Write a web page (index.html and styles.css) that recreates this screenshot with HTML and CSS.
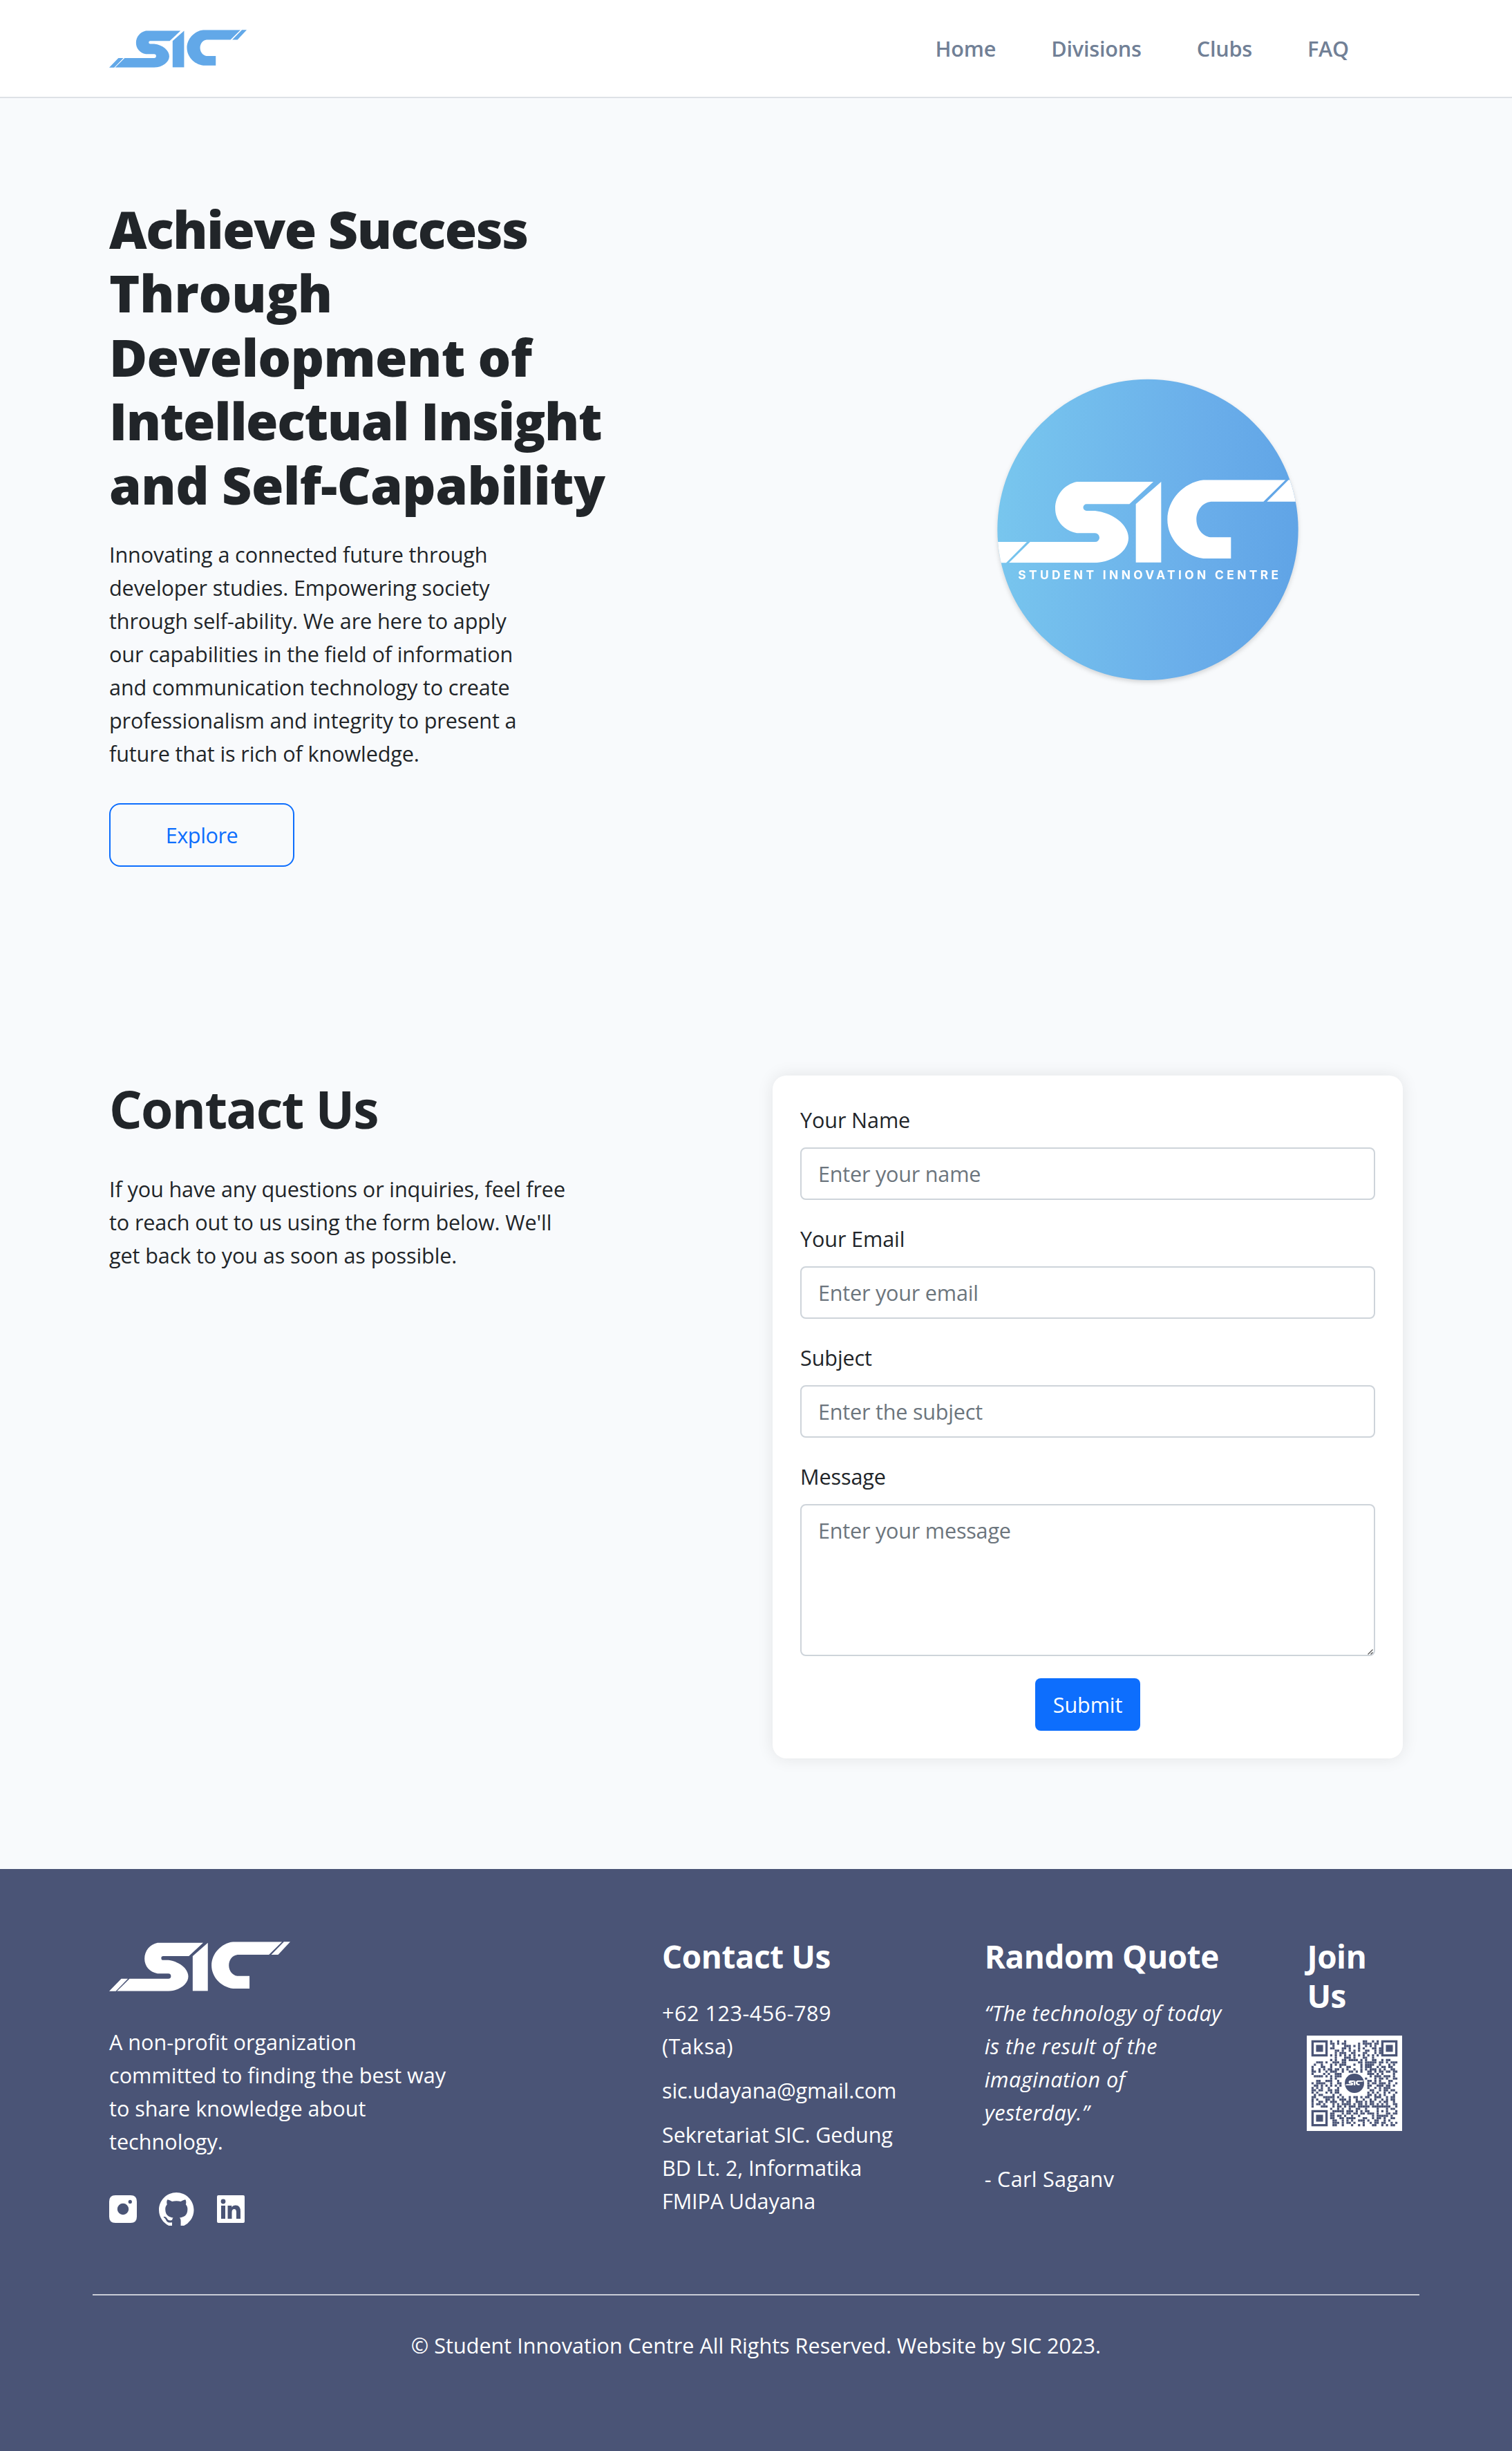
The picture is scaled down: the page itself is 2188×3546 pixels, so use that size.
FILE: index.html
```html
<!DOCTYPE html>
<html lang="en">
<head>
<meta charset="utf-8">
<title>Student Innovation Centre</title>
<link rel="stylesheet" href="styles.css">
</head>
<body>
<svg class="defs" aria-hidden="true">
  <symbol id="letters" viewBox="62 493 1316 360">
    <path d="M118 853 L210 762 H492 A19 19 0 0 0 492 724 H413 C355 712 319 670 319 616 C319 560 358 512 413 501 H745 L641 598 H455 A14.5 14.5 0 0 0 455 627 H492 C575 637 637 690 637 745 C637 800 575 848 492 853 Z"/>
    <path d="M669 598 L779 501 V851 H669 Z"/>
    <path d="M962 493 H1319 L1223 587 H995 C955 592 932 627 932 665 C932 703 958 737 993 742 H1082 V834 H962 C870 820 806 745 806 665 C806 580 875 505 962 493 Z"/>
  </symbol>
  <symbol id="logo" viewBox="62 493 1316 360">
    <use href="#letters" x="62" y="493" width="1316" height="360"/>
    <path d="M62 853 L150 762 H198 L110 853 Z M1240 587 L1332 493 H1378 L1290 587 Z"/>
  </symbol>
</svg>

<header class="nav">
  <div class="container nav-inner">
    <svg class="nav-logo"><use href="#logo"/></svg>
    <nav class="nav-links">
      <a>Home</a><a>Divisions</a><a>Clubs</a><a>FAQ</a>
    </nav>
  </div>
</header>

<main>
  <section class="container hero">
    <div>
      <h1 class="hero-title"><span class="l1">Achieve Success</span><span class="l2">Through</span><span class="l3">Development of</span><span class="l4">Intellectual Insight</span><span class="l5">and Self-Capability</span></h1>
      <p class="hero-text">Innovating a connected future through<br>developer studies. Empowering society<br>through self-ability. We are here to apply<br>our capabilities in the field of information<br>and communication technology to create<br>professionalism and integrity to present a<br>future that is rich of knowledge.</p>
      <a class="explore">Explore</a>
    </div>
    <svg class="hero-badge" viewBox="67 57 1308 1308">
      <defs>
        <linearGradient id="sky" x1="0" y1=".46" x2="1" y2=".54">
          <stop offset="0" stop-color="#78c6ee"/><stop offset=".66" stop-color="#6aaeea"/><stop offset="1" stop-color="#60a4e6"/>
        </linearGradient>
        <clipPath id="disc"><circle cx="721" cy="709" r="653"/></clipPath>
      </defs>
      <circle cx="721" cy="709" r="653" fill="url(#sky)"/>
      <g fill="#fff" clip-path="url(#disc)">
        <use href="#letters" x="62" y="493" width="1316" height="360"/>
        <path d="M60 762 H196 L106 853 H60 Z M1238 587 L1332 493 H1400 V587 Z"/>
        <text class="badge-text" x="158" y="923" textLength="1130">STUDENT INNOVATION CENTRE</text>
      </g>
    </svg>
  </section>

  <section class="container contact">
    <div>
      <h2 class="contact-title">Contact Us</h2>
      <p class="contact-text">If you have any questions or inquiries, feel free<br>to reach out to us using the form below. We'll<br>get back to you as soon as possible.</p>
    </div>
    <form class="card">
      <label for="name">Your Name</label>
      <input id="name" type="text" placeholder="Enter your name">
      <label for="email">Your Email</label>
      <input id="email" type="email" placeholder="Enter your email">
      <label for="subject">Subject</label>
      <input id="subject" type="text" placeholder="Enter the subject">
      <label for="message">Message</label>
      <div class="area">
        <textarea id="message" placeholder="Enter your message"></textarea>
        <svg class="grip" viewBox="0 0 8 8"><path d="M.5 7.5 L7.5 .5 M4.5 7.5 L7.5 4.5"/></svg>
      </div>
      <button class="submit" type="button">Submit</button>
    </form>
  </section>
</main>

<footer class="footer">
  <div class="container footer-cols">
    <div>
      <svg class="footer-logo"><use href="#logo"/></svg>
      <p class="about">A non-profit organization<br>committed to finding the best way<br>to share knowledge about<br>technology.</p>
      <div class="social">
        <svg class="ig" viewBox="0 0 40 40"><path fill-rule="evenodd" d="M9 0H31Q40 0 40 9V31Q40 40 31 40H9Q0 40 0 31V9Q0 0 9 0ZM20 11.8a8.2 8.2 0 1 0 0 16.4a8.2 8.2 0 1 0 0-16.4ZM30.3 6.8a2.6 2.6 0 1 0 0 5.2a2.6 2.6 0 1 0 0-5.2Z"/></svg>
        <svg class="gh" viewBox="0 0 16 15.2"><path d="M8 0C3.58 0 0 3.58 0 8c0 3.54 2.29 6.53 5.47 7.59.4.07.55-.17.55-.38 0-.19-.01-.82-.01-1.49-2.01.37-2.53-.49-2.69-.94-.09-.23-.48-.94-.82-1.13-.28-.15-.68-.52-.01-.53.63-.01 1.08.58 1.23.82.72 1.21 1.87.87 2.33.66.07-.52.28-.87.51-1.07-1.78-.2-3.64-.89-3.64-3.95 0-.87.31-1.59.82-2.15-.08-.2-.36-1.02.08-2.12 0 0 .67-.21 2.2.82.64-.18 1.32-.27 2-.27s1.36.09 2 .27c1.53-1.04 2.2-.82 2.2-.82.44 1.1.16 1.92.08 2.12.51.56.82 1.27.82 2.15 0 3.07-1.87 3.75-3.65 3.95.29.25.54.73.54 1.48 0 1.07-.01 1.93-.01 2.2 0 .21.15.46.55.38A8.01 8.01 0 0 0 16 8c0-4.42-3.58-8-8-8Z"/></svg>
        <svg class="li" viewBox="0 0 40 40"><path fill-rule="evenodd" d="M2 0H38Q40 0 40 2V38Q40 40 38 40H2Q0 40 0 38V2Q0 0 2 0ZM6 15V34H12V15ZM9 5.6a3.4 3.4 0 1 0 0 6.8a3.4 3.4 0 1 0 0-6.8ZM15.5 15V34H21.5V24.5Q21.5 20 25 20Q28 20 28 24.5V34H34V23.5Q34 14.5 27 14.5Q23 14.5 21.3 17.6V15Z"/></svg>
      </div>
    </div>
    <div>
      <h3>Contact Us</h3>
      <p class="phone">+62 123-456-789<br>(Taksa)</p>
      <p>sic.udayana@gmail.com</p>
      <p>Sekretariat SIC. Gedung<br>BD Lt. 2, Informatika<br>FMIPA Udayana</p>
    </div>
    <div>
      <h3>Random Quote</h3>
      <p class="quote">“The technology of today<br>is the result of the<br>imagination of<br>yesterday.”</p>
      <p class="author">- Carl Saganv</p>
    </div>
    <div>
      <h3>Join Us</h3>
      <svg class="qr" viewBox="0 0 41 41">
        <rect width="41" height="41" fill="#fff"/>
        <g id="qr-modules"></g>
        <circle cx="20.5" cy="20.5" r="4.15"/>
        <svg x="16.4" y="19.2" width="8.2" height="2.3" fill="#fff"><use href="#logo"/></svg>
      </svg>
    </div>
  </div>
  <p class="copyright">© Student Innovation Centre All Rights Reserved. Website by SIC 2023.</p>
</footer>
<script src="qr.js"></script>
</body>
</html>
```
FILE: styles.css
```css
* { box-sizing: border-box; }

body {
  margin: 0;
  background: #f8fafc;
  color: #212529;
  font-family: "Open Sans", "Noto Sans", sans-serif;
  font-size: 30.6px;
  line-height: 48px;
  letter-spacing: -0.12px;
}

h1, h2, h3, p { margin: 0; }

.defs { position: absolute; width: 0; height: 0; }

.container { width: 1872px; margin: 0 auto; }

/* Navigation */
.nav { height: 142px; background: #fff; border-bottom: 2px solid #dee2e6; }
.nav-inner { display: flex; justify-content: space-between; align-items: center; height: 140px; }
.nav-logo { width: 199px; height: 55px; fill: #62a8e8; }
.nav-links { display: flex; gap: 80px; padding-right: 78px; color: #718096; font-weight: 600; letter-spacing: -0.2px; }

/* Hero */
.hero { display: grid; grid-template-columns: 1134px 738px; align-items: center; justify-items: start; padding-top: 143px; }
.hero-title { font-size: 75.2px; line-height: 92.4px; font-weight: 800; }
.hero-title span { display: block; white-space: nowrap; }
.l1 { letter-spacing: -1.45px; }
.l2 { letter-spacing: -0.2px; }
.l3 { letter-spacing: -0.6px; }
.l4 { letter-spacing: -1.35px; }
.l5 { letter-spacing: -0.5px; }
.hero-text { margin-top: 31px; }
.explore {
  display: flex; align-items: center; justify-content: center;
  width: 268px; height: 92px; margin-top: 48px;
  border: 2px solid #0d6efd; border-radius: 16px;
  color: #0d6efd; letter-spacing: -0.4px;
}
.hero-badge { justify-self: center; width: 436px; height: 436px; margin-bottom: 6px; filter: drop-shadow(0 3px 3px rgba(0, 0, 0, .15)); overflow: visible; }
.badge-text { font: 700 52px Inter, sans-serif; letter-spacing: 0; }

/* Contact */
.contact { display: grid; grid-template-columns: 960px 912px; align-items: start; padding: 302px 0 160px; }
.contact-title { padding-top: 2px; font-size: 75px; line-height: 92px; font-weight: 700; letter-spacing: -1.7px; }
.contact-text { margin-top: 46px; }
.card {
  display: flex; flex-direction: column;
  height: 988px; padding: 40px;
  background: #fff; border-radius: 20px;
  box-shadow: 0 0 24px rgba(0, 0, 0, .09);
}
.card label { margin-bottom: 16px; }
.card input, .card textarea {
  width: 832px; height: 76px; margin: 0 0 32px; padding: 12px 24px;
  border: 2px solid #ced4da; border-radius: 8px; background: #fff;
  color: #212529; font: inherit; letter-spacing: -0.22px; outline: 0;
}
.card textarea { display: block; height: 220px; resize: none; }
.card ::placeholder { color: #6c757d; opacity: 1; }
.area { position: relative; }
.grip { position: absolute; right: 3px; bottom: 34px; width: 8px; height: 8px; fill: none; stroke: #555; stroke-width: 1.3; }
.submit {
  align-self: center; width: 152px; height: 76px; padding: 0;
  border: 0; border-radius: 8px; background: #0d6efd; color: #fff;
  font: inherit; letter-spacing: -0.12px;
}

/* Footer */
.footer { height: 842px; padding-top: 97px; background: #4a5476; color: #fff; }
.footer-cols {
  display: grid; grid-template-columns: 800px 466.7px 466.7px 138.6px;
  width: 1920px; height: 520px; padding: 0 24px;
  border-bottom: 2px solid #c9ccd6;
}
.footer-logo { display: block; width: 262px; height: 72px; margin-top: 8px; fill: #fff; }
.about { margin-top: 49px; letter-spacing: 0; }
.social { display: flex; align-items: center; margin-top: 50px; height: 48px; fill: #fff; }
.ig { width: 40px; height: 40px; }
.gh { width: 50.5px; height: 48px; margin-left: 32px; }
.li { width: 40px; height: 40px; margin-left: 33px; }
.footer h3 { padding-top: 1px; margin-bottom: 29px; font-size: 45.8px; line-height: 56.8px; font-weight: 700; letter-spacing: -0.4px; }
.footer-cols p + p { margin-top: 16px; }
.phone { letter-spacing: 0.5px; }
.quote { font-style: italic; white-space: nowrap; letter-spacing: 0.45px; }
.footer-cols .quote + .author { margin-top: 48px; letter-spacing: 0.3px; }
.qr { display: block; width: 138px; height: 138px; margin-top: 1px; fill: #4a5476; }
.copyright { margin-top: 48px; text-align: center; letter-spacing: 0; }
```
FILE: qr.js
```js
// Module map of the code, one string per row; the three finder squares are drawn separately.
const rows = [
  "        #  #  #       ##  # #        ",
  "        ## # ##     # #### ##        ",
  "         #    ### # #  # # #         ",
  "        ##   ## #   # #   ## #       ",
  "          ## #  # # #  ##  # #       ",
  "          # ###  ##   ##   # #       ",
  "        # # # # # # # # # # #        ",
  "          #   ### #   ##  #          ",
  "        # #  ## #### # #  ##  # ##   ",
  "  ### #  ### ##     ## ##### ## # ###",
  " #  #   # # ###   #  # ####  #   # # ",
  "#   ##  #   #  ##    # ###  # ## ##  ",
  "#  # # ## ## # #  #  # # ### # #  ## ",
  "## #  # ###  #  ## # #  ## # ## ## ##",
  "#    # #  ###           ### # #    # ",
  " #### # # ###            # ### ### # ",
  "        # #            #   # ## #  ##",
  "  ##  ###  #            ## # #   ##  ",
  "# ####  #  ##           # ## ### #  #",
  " ## # # # # #           ##  ### ## # ",
  "# # #  #   #            #  # # ###   ",
  "## ##  ## ##             ##  # ## ## ",
  "# #   # # ##            # # #  # #  #",
  " # ##    #  #           ## # # #   # ",
  "##   ##### # #  # ## # ##  ###  # ## ",
  "# #   ## #  ### #  #  #  # #  # # ## ",
  "#  ## # ###  # ##  ### # ##  # ##  # ",
  "# ## #   # # #### # ## # ## # # #  ##",
  "#   ###  # ## # ### ##### ########  #",
  "        #  # #  #  ##  #    #   # ## ",
  "         ##### ### # # ##   # # #   #",
  "        ##   # ## ## ## ### #   ## ##",
  "        ## ## #  #  #     # ##### #  ",
  "        ##  ## ####   ##  # ## #  ## ",
  "         ##  # # #  ### #  ##  # #   ",
  "         ### # ## #   #  # ## ##  # #",
  "         ##  #   #  # #   ##  # # ## "
];
const ns = "http://www.w3.org/2000/svg";
const group = document.getElementById("qr-modules");
const path = document.createElementNS(ns, "path");
path.setAttribute("fill-rule", "nonzero");
let d = "";
rows.forEach((row, y) => [...row].forEach((c, x) => {
  if (c === "#") d += `M${x + 2.03} ${y + 2.03}h.94v.94h-.94z`;
}));
for (const [x, y] of [[2, 2], [32, 2], [2, 32]]) {
  d += `M${x} ${y}h7v7h-7zM${x + 1} ${y + 1}v5h5v-5zM${x + 2} ${y + 2}h3v3h-3z`;
}
path.setAttribute("d", d);
group.append(path);
```
